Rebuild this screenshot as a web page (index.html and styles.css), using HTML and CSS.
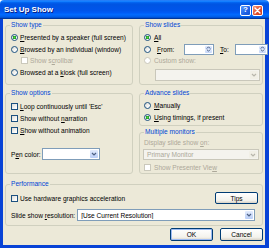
FILE: index.html
```html
<!DOCTYPE html>
<html>
<head>
<meta charset="utf-8">
<link rel="stylesheet" href="styles.css">
</head>
<body>
<div class="win">
  <div class="titlebar">
    <span class="title">Set Up Show</span>
    <span class="tbtn help">?</span>
    <span class="tbtn close"><svg width="7" height="7" viewBox="0 0 7 7"><path d="M1 1L6 6M6 1L1 6" stroke="#fff" stroke-width="1.4" stroke-linecap="round"/></svg></span>
  </div>
  <div class="body">
    <div class="row1">
      <fieldset class="grp lcol">
        <legend>Show type</legend>
        <div class="pad-top">
          <div class="opt l"><span class="radio on"></span><span><u>P</u>resented by a speaker (full screen)</span></div>
          <div class="opt l"><span class="radio"></span><span><u>B</u>rowsed by an individual (window)</span></div>
          <div class="opt sub dis"><span class="check dis"></span><span>Show s<u>c</u>rollbar</span></div>
          <div class="opt l"><span class="radio"></span><span>Browsed at a <u>k</u>iosk (full screen)</span></div>
        </div>
      </fieldset>
      <fieldset class="grp rcol slides">
        <legend>Show slides</legend>
        <div class="pad-top">
          <div class="opt r all"><span class="radio on"></span><span><u>A</u>ll</span></div>
          <div class="opt r from">
            <span class="radio"></span><span class="fromlbl"><u>F</u>rom:</span>
            <span class="spin w30"><span class="arrows"><span class="up"><svg width="5" height="3" viewBox="0 0 5 3"><path d="M0.8 2.5L2.5 0.8L4.2 2.5" fill="none" stroke="#4D6185" stroke-width="1"/></svg></span><span class="dn"><svg width="5" height="3" viewBox="0 0 5 3"><path d="M0.8 0.5L2.5 2.2L4.2 0.5" fill="none" stroke="#4D6185" stroke-width="1"/></svg></span></span></span>
            <span class="tolbl"><u>T</u>o:</span>
            <span class="spin w33"><span class="arrows"><span class="up"><svg width="5" height="3" viewBox="0 0 5 3"><path d="M0.8 2.5L2.5 0.8L4.2 2.5" fill="none" stroke="#4D6185" stroke-width="1"/></svg></span><span class="dn"><svg width="5" height="3" viewBox="0 0 5 3"><path d="M0.8 0.5L2.5 2.2L4.2 0.5" fill="none" stroke="#4D6185" stroke-width="1"/></svg></span></span></span>
          </div>
          <div class="opt r dis"><span class="radio dis"></span><span>Custom show:</span></div>
          <div class="combo dis custom"><span class="txt"></span><span class="cbtn"><svg width="6" height="4" viewBox="0 0 6 4"><path d="M1 1L3 3L5 1" fill="none" stroke="#B8B6AC" stroke-width="1.2"/></svg></span></div>
        </div>
      </fieldset>
    </div>
    <div class="row2">
      <fieldset class="grp lcol options">
        <legend>Show options</legend>
        <div class="pad-top3">
          <div class="opt l h12"><span class="check"></span><span><u>L</u>oop continuously until 'Esc'</span></div>
          <div class="opt l h12"><span class="check"></span><span>Show without <u>n</u>arration</span></div>
          <div class="opt l h12"><span class="check"></span><span><u>S</u>how without animation</span></div>
          <div class="penrow"><span class="penlbl">P<u>e</u>n color:</span><span class="combo pen"><span class="txt"></span><span class="cbtn"><svg width="6" height="4" viewBox="0 0 6 4"><path d="M1 1L3 3L5 1" fill="none" stroke="#4D6185" stroke-width="1.2"/></svg></span></span></div>
        </div>
      </fieldset>
      <div class="rstack">
        <fieldset class="grp rcol advance">
          <legend>Advance slides</legend>
          <div class="pad-top2">
            <div class="opt r h12"><span class="radio"></span><span><u>M</u>anually</span></div>
            <div class="opt r h12"><span class="radio on"></span><span><u>U</u>sing timings, if present</span></div>
          </div>
        </fieldset>
        <fieldset class="grp rcol monitors">
          <legend>Multiple monitors</legend>
          <div class="pad-top2">
            <div class="lbl dis">Display slide show <u>o</u>n:</div>
            <div class="combo dis monitor"><span class="txt">Primary Monitor</span><span class="cbtn"><svg width="6" height="4" viewBox="0 0 6 4"><path d="M1 1L3 3L5 1" fill="none" stroke="#B8B6AC" stroke-width="1.2"/></svg></span></div>
            <div class="opt r dis presenter"><span class="check dis"></span><span>Show Presenter Vie<u>w</u></span></div>
          </div>
        </fieldset>
      </div>
    </div>
    <fieldset class="grp perf">
      <legend>Performance</legend>
      <div class="perfrow1">
        <div class="opt l h12"><span class="check"></span><span>Use hardware graphics acceleration</span></div>
        <span class="xpbtn tips">Tips</span>
      </div>
      <div class="perfrow2">
        <span class="reslbl">Slide show <u>r</u>esolution:</span>
        <span class="combo res"><span class="txt">[Use Current Resolution]</span><span class="cbtn"><svg width="6" height="4" viewBox="0 0 6 4"><path d="M1 1L3 3L5 1" fill="none" stroke="#4D6185" stroke-width="1.2"/></svg></span></span>
      </div>
    </fieldset>
    <div class="btnrow">
      <span class="xpbtn def">OK</span>
      <span class="xpbtn">Cancel</span>
    </div>
  </div>
</div>
</body>
</html>
```
FILE: styles.css
```css
* { box-sizing: border-box; }
html, body { margin: 0; padding: 0; }
body {
  width: 269px; height: 248px; overflow: hidden;
  font-family: "Liberation Sans", Arial, sans-serif;
  font-size: 6.6px; color: #000; background: #fff;
}
u { text-decoration: underline; text-underline-offset: 1px; }
.win { width: 269px; height: 248px; display: flex; flex-direction: column; }
.titlebar {
  height: 19px; flex: none; display: flex; align-items: center;
  padding: 1px 6px 0 4px; gap: 1px;
  border-radius: 4px 4px 0 0;
  background: linear-gradient(to bottom, #0058EE 0%, #3593FF 4%, #288EFF 6%, #127DFF 8%, #036FFC 10%, #0262EE 14%, #0057E5 20%, #0054E3 24%, #0055EB 56%, #005BF5 66%, #026AFE 76%, #0062EF 86%, #0052D6 92%, #0040AB 94%, #003092 100%);
}
.title {
  flex: 1; color: #fff; font-weight: bold; font-size: 8px; margin-top: -1px;
  text-shadow: 1px 1px 0 #0A1E80;
}
.tbtn {
  width: 11px; height: 11px; border: 1px solid #fff; border-radius: 2px;
  display: flex; align-items: center; justify-content: center;
}
.help {
  background: linear-gradient(135deg, #5A9BFF, #1F62E6 60%, #1552D0);
  color: #fff; font-weight: bold; font-size: 8px; line-height: 1;
}
.close { background: linear-gradient(135deg, #F0997C, #E1502E 55%, #C93A1A); }
.body {
  flex: 1; background: #ECE9D8;
  border: solid #0843D6; border-width: 0 4px 3px 3px;
  padding: 2px 2px 0 2px;
  display: flex; flex-direction: column;
}
.grp {
  margin: 0; padding: 0; min-width: 0;
  border: 1px solid #D0D0BF; border-radius: 3px;
}
.grp legend {
  font-size: 6.6px; line-height: 8px; height: 8px;
  padding: 0 1px; margin-left: 4px; color: #0046D5; white-space: nowrap;
}
.row1 { display: flex; gap: 6px; height: 64px; flex: none; }
.lcol { width: 128px; flex: none; height: 100%; }
.rcol { width: 124px; flex: none; }
.row1 .rcol { height: 100%; }
.pad-top { padding-top: 3px; }
.pad-top2 { padding-top: 2px; }
.pad-top3 { padding-top: 3px; }
.opt { display: flex; align-items: center; height: 11.5px; white-space: nowrap; }
.opt.l { padding-left: 5px; gap: 2px; }
.opt.r { padding-left: 4px; gap: 3px; }
.opt.sub { padding-left: 15px; gap: 2px; }
.opt.h12 { height: 12px; }
.dis { color: #ACA899; }
.radio {
  width: 7px; height: 7px; border-radius: 50%; flex: none;
  border: 1px solid #1C5180;
  background: linear-gradient(135deg, #DCDBD3, #FFFFFF 80%);
}
.radio.on {
  background: radial-gradient(circle at 50% 50%, #55D455 0, #21A121 1.5px, transparent 2px),
              linear-gradient(135deg, #DCDBD3, #FFFFFF 80%);
}
.radio.dis { border-color: #CAC8BB; background: #fff; }
.check {
  width: 7px; height: 7px; flex: none;
  border: 1px solid #1C5180;
  background: linear-gradient(135deg, #DCDCD7, #FFFFFF 85%);
}
.check.dis { border-color: #CAC8BB; background: #fff; }
.all { height: 11px; }
.from { height: 12px; gap: 0; }
.from .radio { margin-right: 3px; }
.fromlbl { width: 24px; flex: none; }
.tolbl { width: 15px; padding-left: 3px; flex: none; }
.spin {
  height: 11px; border: 1px solid #7F9DB9; background: #fff; flex: none;
  display: flex; justify-content: flex-end; padding: 1px;
}
.w30 { width: 30px; }
.w33 { width: 33px; }
.arrows { width: 7px; display: flex; flex-direction: column; gap: 0; }
.arrows span {
  flex: 1; display: flex; align-items: center; justify-content: center;
  background: linear-gradient(#E4ECFC, #C3D5F9); border-radius: 1px;
}
.combo {
  display: flex; align-items: center; height: 12px;
  border: 1px solid #7F9DB9; background: #fff; padding: 1px;
}
.combo .txt { flex: 1; padding-left: 2px; white-space: nowrap; overflow: hidden; }
.cbtn {
  width: 8px; height: 100%; border-radius: 1px; flex: none;
  background: linear-gradient(#E3ECFD, #B9CEF7);
  display: flex; align-items: center; justify-content: center;
}
.combo.dis { border-color: #C9C7BA; background: #F4F3EE; }
.combo.dis .cbtn { background: #F1EFE6; }
.custom { width: 105px; margin: 2px 0 0 15px; height: 12px; }
.row2 { display: flex; gap: 6px; height: 85px; margin-top: 4px; flex: none; }
.options { height: 100%; }
.penrow { display: flex; align-items: center; gap: 1px; height: 12px; margin-top: 12px; padding: 0 32px 0 5px; white-space: nowrap; }
.penlbl { flex: none; }
.pen { flex: 1; min-width: 0; }
.rstack { display: flex; flex-direction: column; gap: 2px; }
.advance { height: 37px; }
.monitors { height: 46px; }
.lbl { padding-left: 4px; height: 10px; line-height: 10px; white-space: nowrap; }
.monitor { width: 116px; margin: 1px 0 0 3px; height: 11px; }
.presenter { height: 10px; margin-top: 2px; }
.perf { height: 46px; margin-top: 6px; flex: none; }
.perfrow1 { display: flex; align-items: center; justify-content: space-between; padding: 4px 4px 0 0; height: 16px; }
.perfrow2 { display: flex; align-items: center; gap: 2px; padding: 0 7px 0 5px; margin-top: 5px; height: 12px; white-space: nowrap; }
.reslbl { flex: none; }
.res { flex: 1; min-width: 0; }
.xpbtn {
  width: 43px; height: 13px; flex: none;
  border: 1px solid #003C74; border-radius: 2px;
  background: linear-gradient(#FFFFFF, #F3F2EC 75%, #D8D2C6);
  display: flex; align-items: center; justify-content: center;
}
.tips { height: 12px; }
.xpbtn.def { box-shadow: inset 0 0 0 1px #9DBBF2; }
.btnrow { display: flex; justify-content: flex-end; gap: 7px; margin-top: 2px; }
```
